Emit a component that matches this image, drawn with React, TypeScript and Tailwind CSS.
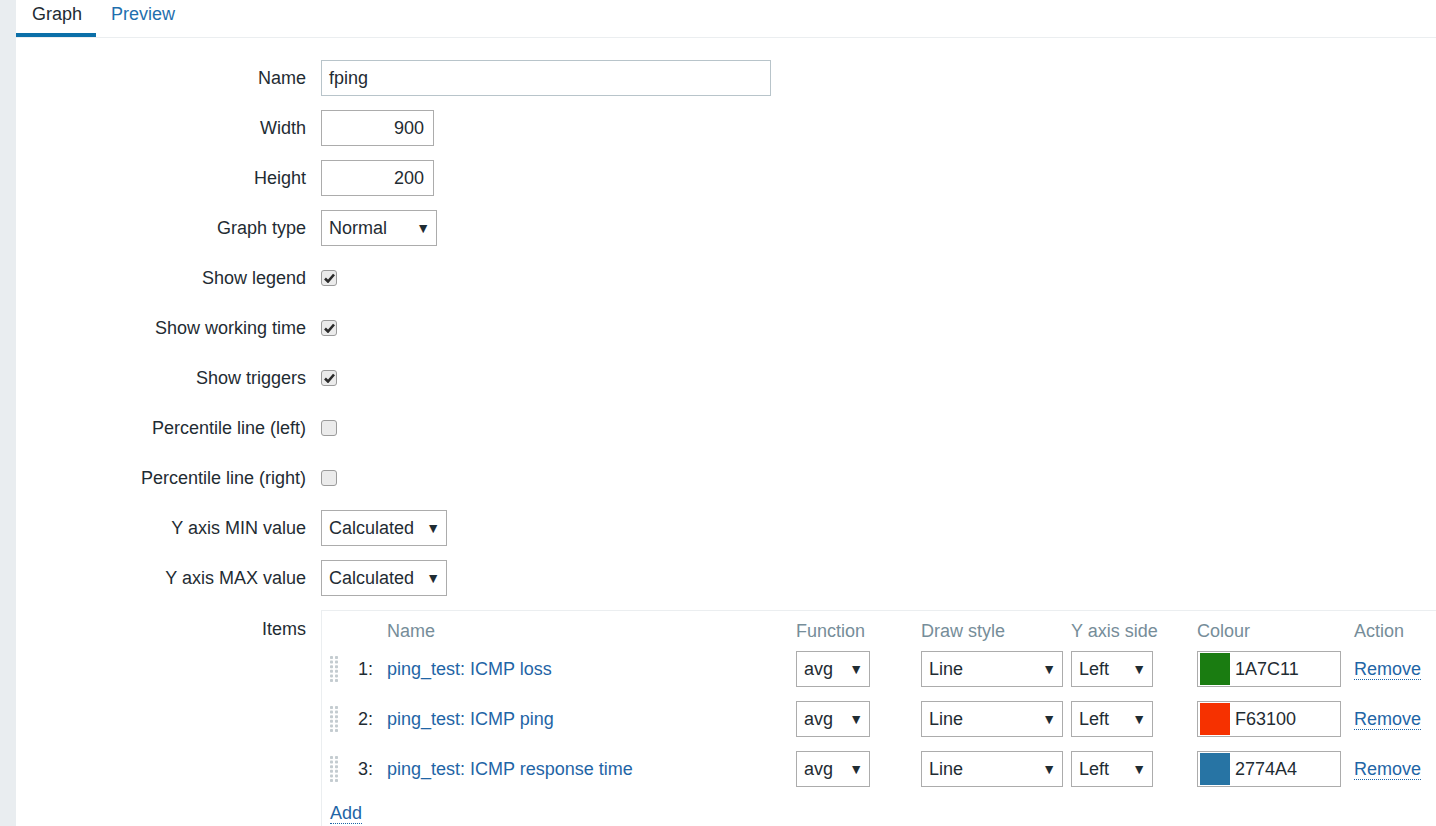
import type { ReactNode } from 'react'

const FONT = { fontFamily: '"Liberation Sans", Arial, sans-serif' }

const ITEMS = [
  { n: 1, name: 'ping_test: ICMP loss', colour: '1A7C11', swatch: 'bg-[#1A7C11]' },
  { n: 2, name: 'ping_test: ICMP ping', colour: 'F63100', swatch: 'bg-[#F63100]' },
  { n: 3, name: 'ping_test: ICMP response time', colour: '2774A4', swatch: 'bg-[#2774A4]' },
]

function Row({ label, children, top = false }: { label: string; children: ReactNode; top?: boolean }) {
  return (
    <div className={`flex ${top ? 'items-start' : 'items-center'} min-h-[36px]`}>
      <div className={`w-[305px] shrink-0 pr-[15px] text-right ${top ? 'pt-[6px]' : ''}`}>{label}</div>
      <div className="min-w-0 flex-1">{children}</div>
    </div>
  )
}

function Select({ value, className }: { value: string; className: string }) {
  return (
    <div className={`flex h-[36px] items-center justify-between border border-[#acacac] bg-white pl-[7px] pr-[6px] ${className}`}>
      <span>{value}</span>
      <span className="text-[14px] text-[#1f2c33]">▼</span>
    </div>
  )
}

function Checkbox({ checked }: { checked: boolean }) {
  return (
    <div className="flex h-[16px] w-[16px] items-center justify-center rounded-[3px] border border-[#9b9b9b] bg-[#ebebeb]">
      {checked && (
        <svg width="11" height="10" viewBox="0 0 11 10">
          <path d="M1 5.5 L4 8.5 L10 1.5" fill="none" stroke="#2b2b2b" strokeWidth="2.6" />
        </svg>
      )}
    </div>
  )
}

function Handle() {
  return (
    <svg width="8" height="27" viewBox="0 0 8 27">
      {[0, 1, 2, 3, 4, 5].map((r) =>
        [0, 1].map((c) => <rect key={`${r}-${c}`} x={c * 5} y={r * 4.6} width="3" height="3" rx="0.8" fill="#c4ccd0" />),
      )}
    </svg>
  )
}

export default function App() {
  return (
    <div className="flex min-h-[826px] bg-white text-[18px] text-[#1f2c33]" style={FONT}>
      <div className="w-[16px] shrink-0 bg-[#e9edf0]" />
      <div className="min-w-0 flex-1 overflow-hidden">
        <div className="flex h-[38px] border-b border-[#ebeef0]">
          <div className="h-[37px] w-[80px] border-b-4 border-[#0b6fa8] pl-[16px] pt-[4px] leading-[20px]">Graph</div>
          <div className="h-[37px] pl-[15px] pt-[4px] leading-[20px] text-[#1f6fae]">Preview</div>
        </div>

        <div className="flex flex-col gap-[14px] pt-[22px]">
          <Row label="Name">
            <div className="flex h-[36px] w-[450px] items-center border border-[#b8c4ca] px-[7px]">fping</div>
          </Row>
          <Row label="Width">
            <div className="flex h-[36px] w-[113px] items-center justify-end border border-[#acacac] pr-[9px]">900</div>
          </Row>
          <Row label="Height">
            <div className="flex h-[36px] w-[113px] items-center justify-end border border-[#acacac] pr-[9px]">200</div>
          </Row>
          <Row label="Graph type">
            <Select value="Normal" className="w-[116px]" />
          </Row>
          <Row label="Show legend">
            <Checkbox checked />
          </Row>
          <Row label="Show working time">
            <Checkbox checked />
          </Row>
          <Row label="Show triggers">
            <Checkbox checked />
          </Row>
          <Row label="Percentile line (left)">
            <Checkbox checked={false} />
          </Row>
          <Row label="Percentile line (right)">
            <Checkbox checked={false} />
          </Row>
          <Row label="Y axis MIN value">
            <Select value="Calculated" className="w-[126px]" />
          </Row>
          <Row label="Y axis MAX value">
            <Select value="Calculated" className="w-[126px]" />
          </Row>
          <Row label="Items" top>
            <div className="w-[1200px] border-l border-t border-[#ebeef0] pb-[6px] pl-[8px] pt-[10px]">
              <div className="grid grid-cols-[28px_29px_409px_125px_150px_126px_157px_1fr] items-center gap-y-[14px]">
                <div />
                <div />
                <div className="-mb-[4px] leading-[20px] text-[#768d99]">Name</div>
                <div className="-mb-[4px] leading-[20px] text-[#768d99]">Function</div>
                <div className="-mb-[4px] leading-[20px] text-[#768d99]">Draw style</div>
                <div className="-mb-[4px] leading-[20px] text-[#768d99]">Y axis side</div>
                <div className="-mb-[4px] leading-[20px] text-[#768d99]">Colour</div>
                <div className="-mb-[4px] leading-[20px] text-[#768d99]">Action</div>
                {ITEMS.map((it) => (
                  <div key={it.n} className="contents">
                    <div className="flex items-center pt-[1px]">
                      <Handle />
                    </div>
                    <div>{it.n}:</div>
                    <div className="text-[#1f65a6]">{it.name}</div>
                    <div>
                      <Select value="avg" className="w-[74px]" />
                    </div>
                    <div>
                      <Select value="Line" className="w-[142px]" />
                    </div>
                    <div>
                      <Select value="Left" className="w-[82px]" />
                    </div>
                    <div>
                      <div className="flex h-[36px] w-[144px] items-center gap-[5px] border border-[#acacac] p-[2px]">
                        <div className={`h-[32px] w-[30px] ${it.swatch}`} />
                        <span>{it.colour}</span>
                      </div>
                    </div>
                    <div>
                      <span className="border-b border-dotted border-[#1f65a6] text-[#1f65a6]">Remove</span>
                    </div>
                  </div>
                ))}
              </div>
              <div className="mt-[13px]">
                <span className="border-b border-dotted border-[#1f65a6] text-[#1f65a6]">Add</span>
              </div>
            </div>
          </Row>
        </div>
      </div>
    </div>
  )
}
